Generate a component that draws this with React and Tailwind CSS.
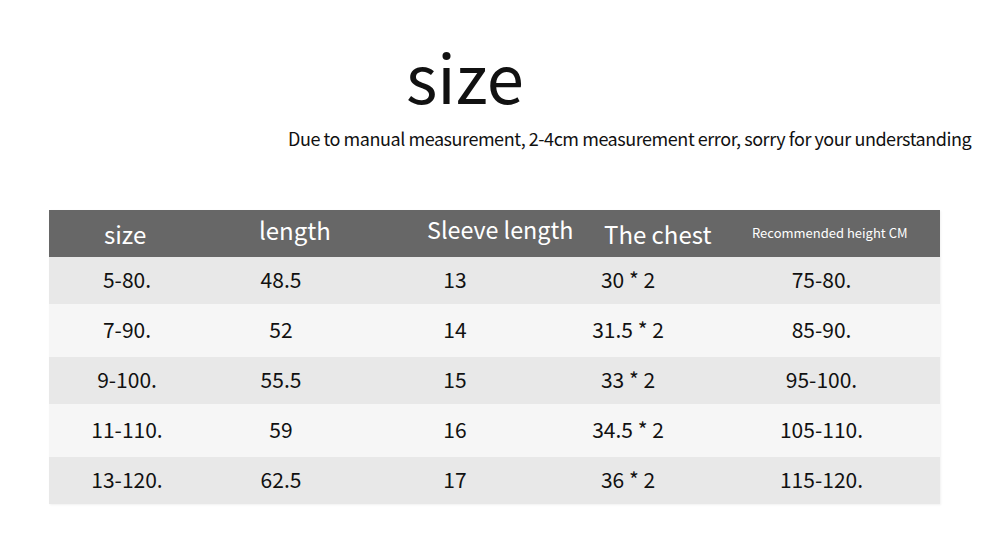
export default function App() {
  const font = { fontFamily: '"Noto Sans CJK SC", "Noto Sans", sans-serif' };
  const rows = [
    ["5-80.", "48.5", "13", "30 * 2", "75-80."],
    ["7-90.", "52", "14", "31.5 * 2", "85-90."],
    ["9-100.", "55.5", "15", "33 * 2", "95-100."],
    ["11-110.", "59", "16", "34.5 * 2", "105-110."],
    ["13-120.", "62.5", "17", "36 * 2", "115-120."],
  ];
  return (
    <div className="w-[1000px] h-[548px] bg-white text-[#111] overflow-hidden" style={font}>
      <div className="pt-[41px] pl-[406px] h-[120px]">
        <div className="text-[67px] leading-none">size</div>
      </div>
      <div className="pl-[288px] h-[90px] pt-[9px]">
        <div className="text-[18px] leading-none tracking-[-0.45px] whitespace-nowrap">
          Due to manual measurement, 2-4cm measurement error, sorry for your understanding
        </div>
      </div>
      <div className="ml-[49px] w-[891px] shadow-[1px_1px_2px_rgba(0,0,0,0.06)]">
        <div className="flex h-[47px] bg-[#676767] text-white items-center">
          <div className="w-[156px] pl-[55px] pt-[1px] text-[24px]">size</div>
          <div className="w-[152px] pl-[54px] pb-[7px] text-[24px]">length</div>
          <div className="w-[196px] pl-[70px] pb-[9px] text-[23.3px] whitespace-nowrap">Sleeve length</div>
          <div className="w-[150px] pl-[51px] pt-[0px] text-[24px] whitespace-nowrap">The chest</div>
          <div className="flex-1 pl-[49px] pb-[2px] text-[13px] whitespace-nowrap">Recommended height CM</div>
        </div>
        {rows.map((r, i) => (
          <div
            key={i}
            className={
              "grid grid-cols-[156px_152px_196px_150px_1fr] items-center text-[21px] text-center " +
              (i % 2 === 0 ? "h-[47px] bg-[#e8e8e8]" : "h-[53px] bg-[#f6f6f6]")
            }
          >
            {r.map((c, j) => (
              <div key={j} className="pb-[1px]">{c}</div>
            ))}
          </div>
        ))}
      </div>
    </div>
  );
}
